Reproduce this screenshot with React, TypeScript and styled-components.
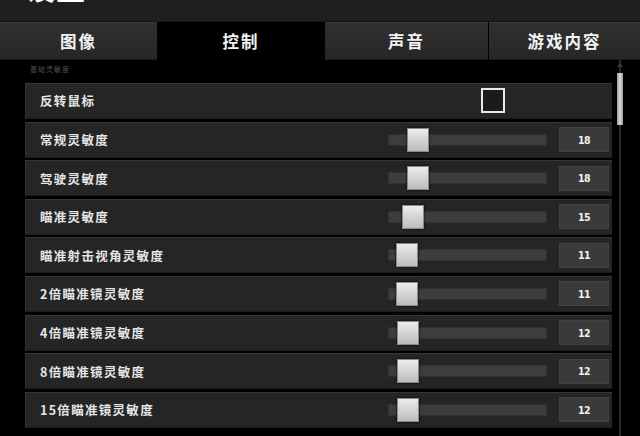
import React from 'react';
import styled, { createGlobalStyle } from 'styled-components';

const GlobalStyle = createGlobalStyle`
  html, body {
    margin: 0;
    padding: 0;
    background: #000;
    overflow: hidden;
  }
  * {
    box-sizing: border-box;
  }
`;

const FONT = `'Noto Sans CJK SC', 'Noto Sans', 'Liberation Sans', sans-serif`;

const TRACK_WIDTH = 159;
const THUMB_WIDTH = 22;
const MIN = 7;
const MAX = 91;

interface SliderItem {
  label: string;
  value: number;
}

const sliders: SliderItem[] = [
  { label: '常规灵敏度', value: 18 },
  { label: '驾驶灵敏度', value: 18 },
  { label: '瞄准灵敏度', value: 15 },
  { label: '瞄准射击视角灵敏度', value: 11 },
  { label: '2倍瞄准镜灵敏度', value: 11 },
  { label: '4倍瞄准镜灵敏度', value: 12 },
  { label: '8倍瞄准镜灵敏度', value: 12 },
  { label: '15倍瞄准镜灵敏度', value: 12 },
];

const tabs = ['图像', '控制', '声音', '游戏内容'];

function Slider({ value }: { value: number }) {
  const left = ((value - MIN) / (MAX - MIN)) * (TRACK_WIDTH - THUMB_WIDTH);
  return (
    <Track>
      <Thumb style={{ left }} />
    </Track>
  );
}

export default function App() {
  return (
    <>
      <GlobalStyle />
      <Page>
        <Header>
          <Title>设置</Title>
        </Header>
        <TabBar>
          {tabs.map((tab) => (
            <Tab key={tab} $active={tab === '控制'}>
              {tab}
            </Tab>
          ))}
        </TabBar>
        <Body>
          <List>
            <SectionTitle>基础灵敏度</SectionTitle>
            <CheckRow>
              <Label>反转鼠标</Label>
              <Checkbox />
            </CheckRow>
            {sliders.map((item) => (
              <SliderRow key={item.label}>
                <Label>{item.label}</Label>
                <Slider value={item.value} />
                <ValueBox>{item.value}</ValueBox>
              </SliderRow>
            ))}
          </List>
          <ScrollBar>
            <ScrollArrow />
            <ScrollThumb />
          </ScrollBar>
        </Body>
      </Page>
    </>
  );
}

const Page = styled.div`
  width: 640px;
  height: 436px;
  display: flex;
  flex-direction: column;
  background: #000;
  overflow: hidden;
  font-family: ${FONT};
`;

const Header = styled.div`
  height: 22px;
  flex-shrink: 0;
  background: #1f1f1f;
  border-bottom: 1px solid #141414;
  overflow: hidden;
  padding-left: 26px;
`;

const Title = styled.div`
  margin-top: -28px;
  font-size: 29px;
  line-height: 30px;
  font-weight: 700;
  color: #fff;
  letter-spacing: 1px;
`;

const TabBar = styled.div`
  height: 38px;
  flex-shrink: 0;
  display: grid;
  grid-template-columns: 157px 166px 163px 1fr;
  column-gap: 1px;
  background: #000;
`;

const Tab = styled.div<{ $active: boolean }>`
  display: flex;
  align-items: center;
  justify-content: center;
  font-size: 16.5px;
  font-weight: 700;
  letter-spacing: 2px;
  color: #f2f2f2;
  background: ${({ $active }) =>
    $active ? '#000' : 'linear-gradient(#303030, #262626)'};
  border-top: 1px solid ${({ $active }) => ($active ? '#000' : '#3a3a3a')};
  border-bottom: 1px solid ${({ $active }) => ($active ? '#000' : '#1a1a1a')};
`;

const Body = styled.div`
  flex: 1;
  display: flex;
  padding-left: 25px;
  overflow: hidden;
`;

const List = styled.div`
  width: 587px;
  display: flex;
  flex-direction: column;
  gap: 2.6px;
`;

const SectionTitle = styled.div`
  height: 20.4px;
  padding-top: 5px;
  padding-left: 5px;
  font-size: 7px;
  line-height: 8px;
  color: #505050;
  letter-spacing: 1px;
`;

const RowBase = styled.div`
  height: 36px;
  flex-shrink: 0;
  display: grid;
  align-items: center;
  padding-left: 14px;
  background: #252525;
  border-top: 1px solid #353535;
  border-left: 1px solid #303030;
  border-bottom: 1px solid #1c1c1c;
`;

const CheckRow = styled(RowBase)`
  grid-template-columns: 441px 24px;
`;

const SliderRow = styled(RowBase)`
  grid-template-columns: 336px ${TRACK_WIDTH}px 50px;
  column-gap: 12px;
`;

const Label = styled.div`
  font-size: 12.5px;
  font-weight: 700;
  color: #e6e6e6;
  letter-spacing: 1.3px;
  white-space: nowrap;
`;

const Checkbox = styled.div`
  width: 24px;
  height: 25px;
  border: 2px solid #e8e8e8;
  background: #1b1b1b;
`;

const Track = styled.div`
  position: relative;
  height: 12px;
  background: #3d3d3d;
  border: 1px solid #303030;
`;

const Thumb = styled.div`
  position: absolute;
  top: -7px;
  width: ${THUMB_WIDTH}px;
  height: 24px;
  background: linear-gradient(#ececec, #bcbcbc);
  border: 1px solid #8a8a8a;
  box-shadow: 0 0 2px #000;
`;

const ValueBox = styled.div`
  height: 25px;
  display: flex;
  align-items: center;
  justify-content: center;
  background: #3a3a3a;
  border: 1px solid #414141;
  color: #f0f0f0;
  font-family: 'DejaVu Sans Condensed', 'Liberation Sans', sans-serif;
  font-size: 10.5px;
  font-weight: 700;
  letter-spacing: -0.5px;
`;

const ScrollBar = styled.div`
  width: 8px;
  margin-left: 4px;
  display: flex;
  flex-direction: column;
  align-items: center;
  background: linear-gradient(
    to right,
    transparent 3px,
    #2a2a2a 3px,
    #2a2a2a 5px,
    transparent 5px
  );
`;

const ScrollArrow = styled.div`
  margin-top: 3px;
  width: 0;
  height: 0;
  border-left: 3px solid transparent;
  border-right: 3px solid transparent;
  border-bottom: 4px solid #3c3c3c;
`;

const ScrollThumb = styled.div`
  margin-top: 6px;
  width: 6px;
  height: 52px;
  background: linear-gradient(to right, #9a9a9a, #d8d8d8, #9a9a9a);
`;
